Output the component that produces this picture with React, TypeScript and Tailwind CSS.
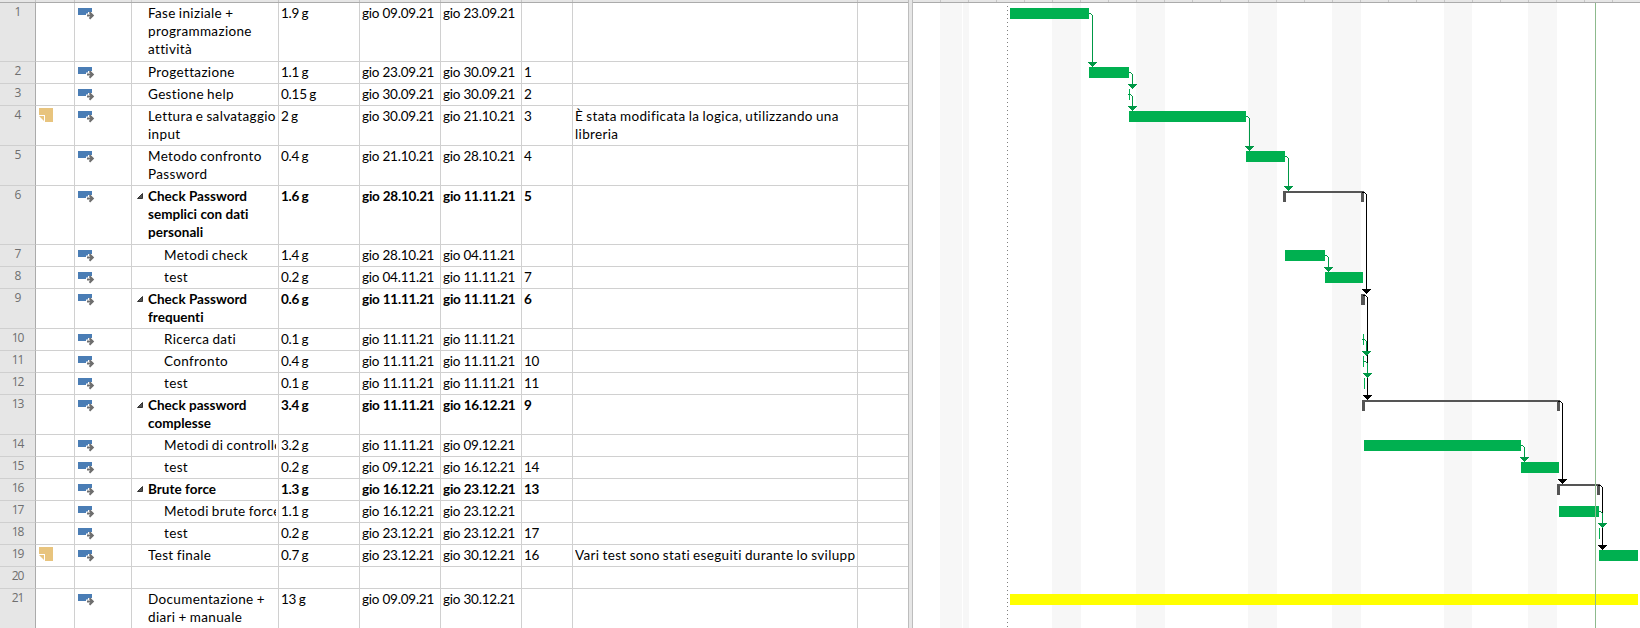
const heights = [59, 22, 22, 40, 40, 59, 22, 22, 40, 22, 22, 22, 40, 22, 22, 22, 22, 22, 22, 22, 40];

type Task = {
  name: string[];
  dur: string;
  start: string;
  end: string;
  pred?: string;
  note?: string[];
  level?: number;
  summary?: boolean;
};

const g = 'gio ';
const tasks: (Task | null)[] = [
  { name: ['Fase iniziale +', 'programmazione', 'attività'], dur: '1.9 g', start: '09.09.21', end: '23.09.21' },
  { name: ['Progettazione'], dur: '1.1 g', start: '23.09.21', end: '30.09.21', pred: '1' },
  { name: ['Gestione help'], dur: '0.15 g', start: '30.09.21', end: '30.09.21', pred: '2' },
  { name: ['Lettura e salvataggio', 'input'], dur: '2 g', start: '30.09.21', end: '21.10.21', pred: '3', note: ['È stata modificata la logica, utilizzando una', 'libreria'] },
  { name: ['Metodo confronto', 'Password'], dur: '0.4 g', start: '21.10.21', end: '28.10.21', pred: '4' },
  { name: ['Check Password', 'semplici con dati', 'personali'], dur: '1.6 g', start: '28.10.21', end: '11.11.21', pred: '5', summary: true },
  { name: ['Metodi check'], dur: '1.4 g', start: '28.10.21', end: '04.11.21', level: 1 },
  { name: ['test'], dur: '0.2 g', start: '04.11.21', end: '11.11.21', pred: '7', level: 1 },
  { name: ['Check Password', 'frequenti'], dur: '0.6 g', start: '11.11.21', end: '11.11.21', pred: '6', summary: true },
  { name: ['Ricerca dati'], dur: '0.1 g', start: '11.11.21', end: '11.11.21', level: 1 },
  { name: ['Confronto'], dur: '0.4 g', start: '11.11.21', end: '11.11.21', pred: '10', level: 1 },
  { name: ['test'], dur: '0.1 g', start: '11.11.21', end: '11.11.21', pred: '11', level: 1 },
  { name: ['Check password', 'complesse'], dur: '3.4 g', start: '11.11.21', end: '16.12.21', pred: '9', summary: true },
  { name: ['Metodi di controllo'], dur: '3.2 g', start: '11.11.21', end: '09.12.21', level: 1 },
  { name: ['test'], dur: '0.2 g', start: '09.12.21', end: '16.12.21', pred: '14', level: 1 },
  { name: ['Brute force'], dur: '1.3 g', start: '16.12.21', end: '23.12.21', pred: '13', summary: true },
  { name: ['Metodi brute force'], dur: '1.1 g', start: '16.12.21', end: '23.12.21', level: 1 },
  { name: ['test'], dur: '0.2 g', start: '23.12.21', end: '23.12.21', pred: '17', level: 1 },
  { name: ['Test finale'], dur: '0.7 g', start: '23.12.21', end: '30.12.21', pred: '16', note: ['Vari test sono stati eseguiti durante lo sviluppo'] },
  null,
  { name: ['Documentazione +', 'diari + manuale'], dur: '13 g', start: '09.09.21', end: '30.12.21' },
];

const cell = 'shrink-0 overflow-hidden border-r border-b border-[#d0d0d0] whitespace-nowrap';

function NoteIcon() {
  return (
    <svg width="14" height="14" className="mt-0.5 ml-[3px] block">
      <path d="M0 0H14V14H6V7H0Z" fill="#e8c47e" />
      <path d="M0 8H5V13Z" fill="#e8c47e" />
    </svg>
  );
}

function AutoIcon() {
  return (
    <svg width="17" height="13" className="mt-[5px] ml-[3px] block">
      <rect width="14" height="7" fill="#4a7db5" />
      <path d="M8 5.5H10V4H15V13H8Z" fill="#fff" />
      <path d="M9 7.5H14.5M11.5 4.2L14.8 7.5L11.5 10.8" fill="none" stroke="#6e6e6e" strokeWidth="2" />
    </svg>
  );
}

function Row({ task, index }: { task: Task | null; index: number }) {
  const bold = task?.summary ? 'font-bold' : '';
  const text = task?.summary ? 'tracking-[0.03px]' : 'tracking-[0.35px] [word-spacing:-0.7px]';
  const num = 'tracking-[-0.22px]';
  return (
    <div className="flex shrink-0" style={{ height: heights[index] }}>
      <div className="w-9 shrink-0 border-r border-b border-r-[#ababab] border-b-[#cfcfcf] bg-[#e6e6e6] text-center font-['Open_Sans',sans-serif] text-[12px] leading-[18px] tracking-[-1px] text-[#6f6f6f]">
        {index + 1}
      </div>
      <div className={`${cell} w-[39px]`}>{task?.note && <NoteIcon />}</div>
      <div className={`${cell} w-[57px]`}>{task && <AutoIcon />}</div>
      <div className={`${cell} flex w-[147px] pr-0.5 ${bold}`}>
        <div className={task?.level ? 'w-8 shrink-0' : 'w-4 shrink-0'}>
          {task?.summary && (
            <svg width="6" height="6" className="mt-[7px] ml-[5px] block">
              <path d="M5.5 0.5V5.5H0.5Z" fill="#555" stroke="#333" />
            </svg>
          )}
        </div>
        <div className={`overflow-hidden pt-px ${text}`}>{task?.name.map((l) => <div key={l}>{l}</div>)}</div>
      </div>
      <div className={`${cell} w-[81px] pt-px pl-0.5 [word-spacing:-0.8px] ${num} ${bold}`}>{task?.dur}</div>
      <div className={`${cell} w-[81px] pt-px pl-0.5 ${num} ${bold}`}>{task && g + task.start}</div>
      <div className={`${cell} w-[81px] pt-px pl-0.5 ${num} ${bold}`}>{task && g + task.end}</div>
      <div className={`${cell} w-[51px] pt-px pl-0.5 ${num} ${bold}`}>{task?.pred}</div>
      <div className={`${cell} w-[285px] pt-px pr-0.5 pl-0.5`}>
        <div className={`overflow-hidden ${text}`}>{task?.note?.map((l) => <div key={l}>{l}</div>)}</div>
      </div>
      <div className="w-[50px] shrink-0 border-b border-[#d0d0d0]" />
    </div>
  );
}

const bands = [[940, 22], [963, 6], [1052, 29], [1136, 29], [1248, 29], [1332, 29], [1444, 28], [1528, 29]];
const bars = [
  [1010, 8, 79], [1089, 67, 40], [1129, 89, 1], [1129, 111, 117], [1246, 151, 39], [1285, 250, 40], [1325, 272, 38],
  [1363, 334, 1], [1363, 356, 1], [1364, 378, 1], [1364, 440, 157], [1521, 462, 38], [1559, 506, 40], [1599, 528, 1], [1599, 550, 39],
];
const summaries = [[1283, 191, 81], [1361, 294, 4], [1362, 400, 198], [1557, 484, 43]];
const GREEN = '#009846';
const links: [number, number, number, number, string][] = [
  [1089, 13, 1092, 66, GREEN],
  [1129, 72, 1132, 88, GREEN],
  [1128, 94, 1132, 110, GREEN],
  [1246, 116, 1249, 150, GREEN],
  [1285, 156, 1288, 190, GREEN],
  [1325, 255, 1328, 271, GREEN],
  [1362, 192, 1366, 293, '#000'],
  [1363, 295, 1367, 399, '#000'],
  [1362, 339, 1366, 355, GREEN],
  [1363, 361, 1367, 377, GREEN],
  [1521, 445, 1524, 461, GREEN],
  [1558, 401, 1562, 483, '#000'],
  [1598, 485, 1602, 549, '#000'],
  [1599, 511, 1602, 527, GREEN],
];

function Link({ x1, y1, x2, y2, color }: { x1: number; y1: number; x2: number; y2: number; color: string }) {
  return (
    <g fill={color}>
      <rect x={x1} y={y1} width={x2 - x1 - 1} height="1" />
      <rect x={x2 - 1} y={y1 + 1} width="1" height="1" />
      <rect x={x2} y={y1 + 2} width="1" height={y2 - y1 - 1} />
      {[4, 3, 2, 1].map((r, i) => (
        <rect key={r} x={x2 - r} y={y2 - 4 + i} width={2 * r + 1} height="1" />
      ))}
    </g>
  );
}

function Chart() {
  return (
    <svg width="727" height="625" viewBox="913 3 727 625" className="block" shapeRendering="crispEdges">
      {bands.map(([x, w]) => <rect key={x} x={x} y="3" width={w} height="625" fill="#f7f7f7" />)}
      <path d="M1007.5 6V628" stroke="#808080" strokeDasharray="1 3" />
      {bars.map(([x, y, w]) => <rect key={y} x={x} y={y} width={w} height="11" fill="#00b050" />)}
      <rect x="1010" y="594" width="628" height="11" fill="#ffff00" />
      {summaries.map(([x, y, w]) => (
        <g key={y} fill="#555">
          <rect x={x} y={y} width={w} height="2" />
          <rect x={x} y={y} width="3" height="11" />
          <rect x={x + w - 3} y={y} width="3" height="11" />
        </g>
      ))}
      {links.map(([x1, y1, x2, y2, color]) => <Link key={`${x1}-${y1}`} x1={x1} y1={y1} x2={x2} y2={y2} color={color} />)}
      <rect x="1595" y="3" width="1" height="625" fill="#8dba8d" />
    </svg>
  );
}

export default function App() {
  return (
    <div className="flex h-[628px] w-[1640px] overflow-hidden bg-white font-[Lato,sans-serif] text-[13.5px] leading-[18px] text-black">
      <div className="flex w-[908px] shrink-0 flex-col">
        <div className="flex h-[3px] shrink-0 border-b border-[#ababab] bg-[#e6e6e6]">
          {[36, 39, 57, 147, 81, 81, 81, 51, 285].map((w, i) => (
            <div key={i} className="shrink-0 border-r border-[#c6c6c6]" style={{ width: w }} />
          ))}
        </div>
        {tasks.map((t, i) => <Row key={i} task={t} index={i} />)}
      </div>
      <div className="w-[5px] shrink-0 border-x border-[#bdbdbd] bg-[#e6e6e6]" />
      <div className="w-[727px] shrink-0 overflow-hidden">
        <div className="flex h-[3px] border-b border-[#ababab] bg-[#e6e6e6]">
          {Array.from({ length: 26 }, (_, i) => <div key={i} className="w-7 shrink-0 border-r border-[#c6c6c6]" />)}
        </div>
        <Chart />
      </div>
    </div>
  );
}
